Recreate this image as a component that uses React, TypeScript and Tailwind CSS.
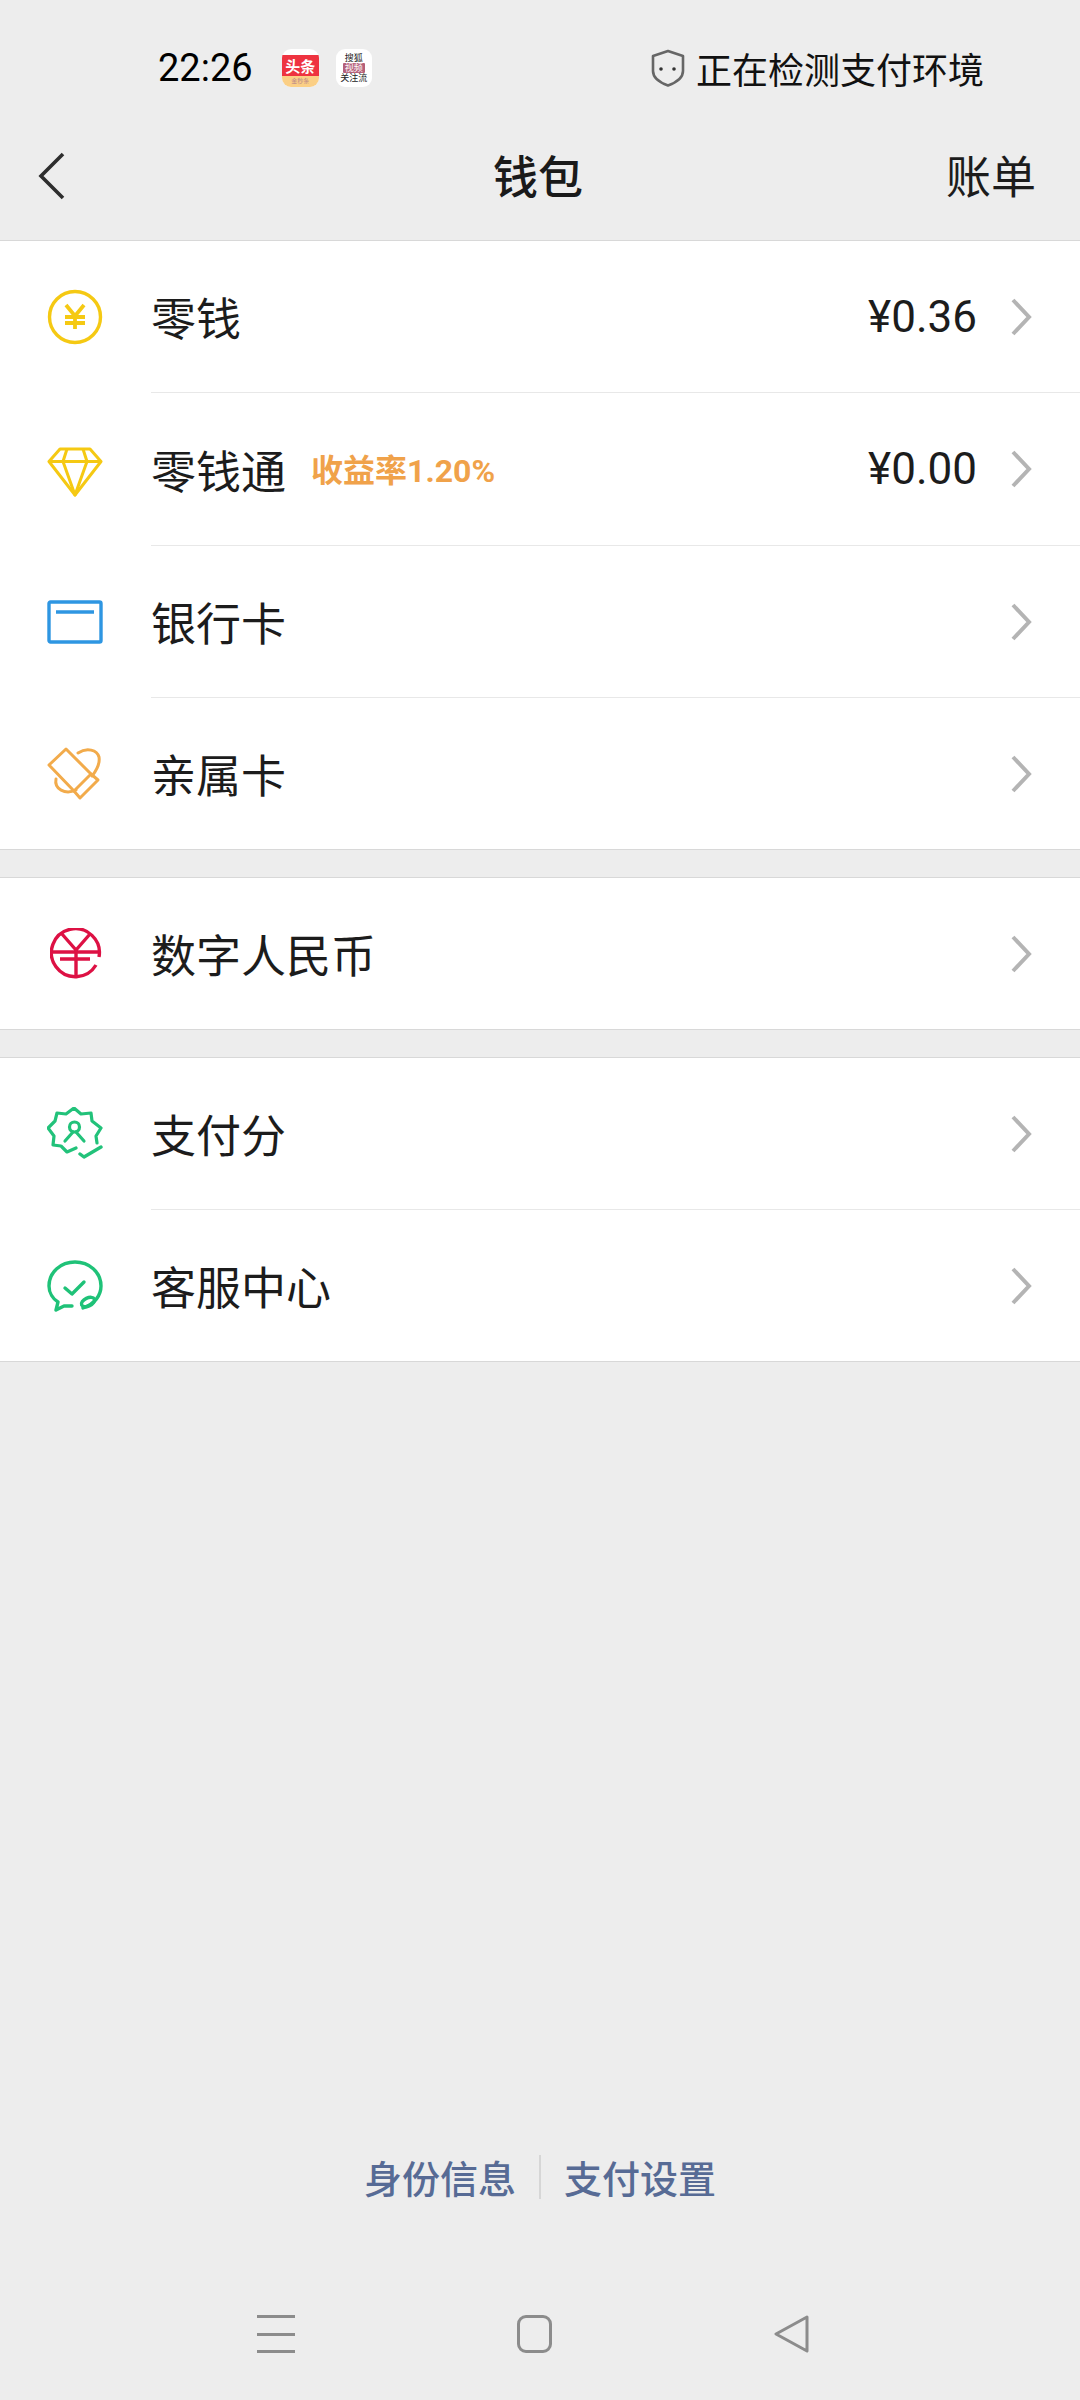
import React from "react";

const cjk = { fontFamily: '"Noto Sans CJK SC", "Noto Sans", sans-serif' };

function Chevron() {
  return (
    <svg width="22" height="40" viewBox="0 0 22 40" className="shrink-0" fill="none">
      <path d="M3 3 L19 20 L3 37" stroke="#b4b4b4" strokeWidth="4" />
    </svg>
  );
}

const Coin = () => (
  <svg width="56" height="56" viewBox="0 0 56 56" fill="none" stroke="#f5c913" strokeWidth="3.4">
    <circle cx="28" cy="28" r="25.5" />
    <path d="M19 16 L28 27 L37 16 M28 27 V40 M18 28 H38 M18 34 H38" strokeWidth="3.8" />
  </svg>
);
const Diamond = () => (
  <svg width="56" height="50" viewBox="0 0 56 50" className="mt-[5px]" fill="none" stroke="#f5c913" strokeWidth="3" strokeLinejoin="round">
    <path d="M13 2 H43 L54 14.5 L28 48 L2 14.5 Z" />
    <path d="M2 14.5 H54 M20 2 L16 14.5 L28 48 L40 14.5 L36 2" />
  </svg>
);
const BankCard = () => (
  <svg width="56" height="44" viewBox="0 0 56 44" fill="none" stroke="#2e96e2" strokeWidth="3.4">
    <rect x="2" y="2" width="52" height="40" rx="1.5" />
    <path d="M9 12 H47" />
  </svg>
);
const FamilyCard = () => (
  <svg width="56" height="54" viewBox="0 0 56 54" fill="none" stroke="#f2ab4b" strokeWidth="3" strokeLinejoin="round" strokeLinecap="round">
    <path d="M19 2 L44 27 L27 44 L2 18 Z" />
    <path d="M44 27 L51 33 L33 51 L27 44" />
    <path d="M31 6 C40 0 50 3 52 10 C53 16 49 24 45 29" />
    <path d="M9 32 C7 42 18 48 29 43" />
  </svg>
);
const DigitalRmb = () => (
  <svg width="52" height="52" viewBox="0 0 52 52" className="ml-[3px] mt-[1px]" fill="none" stroke="#dd1144" strokeWidth="3.4">
    <path d="M46 37 A24 24 0 1 1 49 29" />
    <path d="M12 6 L26 22 L40 6 M26 22 V50 M3 24 H49 M10 31 H40" />
  </svg>
);
const PayScore = () => (
  <svg width="56" height="54" viewBox="0 0 56 54" fill="none" stroke="#22c27a" strokeWidth="3.2" strokeLinejoin="round" strokeLinecap="round">
    <path d="M29 41 L20 45 L14 39 L6 38 L7 29 L1 21 L8 14 L10 6 L19 7 L27 1 L34 7 L44 6 L45 14 L54 21 L49 29 L50 36" />
    <circle cx="27.5" cy="20" r="5" />
    <path d="M18 34 L26 25 M37 34 L29 25" />
    <path d="M33 47 L37 50 L54 40" strokeWidth="3.4" />
  </svg>
);
const Service = () => (
  <svg width="56" height="52" viewBox="0 0 56 52" fill="none" stroke="#1fc278" strokeWidth="3.4" strokeLinecap="round" strokeLinejoin="round">
    <path d="M36 48 C48 44 54 35 54 26 C54 12 42 2 28 2 C14 2 2 12 2 26 C2 33 6 39 11 42 L9 50 L17 46 L25 46" />
    <path d="M18 28 L25 34 L37 22" />
    <ellipse cx="41" cy="42" rx="7" ry="4" transform="rotate(-25 41 42)" />
  </svg>
);

function Row({ icon, label, tag, amount, divider, height = "h-[152px]" }: { icon: React.ReactNode; label: string; tag?: string; amount?: string; divider?: boolean; height?: string }) {
  return (
    <div className={`flex items-stretch ${height}`}>
      <div className="flex w-[151px] shrink-0 items-center pl-[47px]">{icon}</div>
      <div className={`flex flex-1 items-center pr-[48px] ${divider ? "border-b border-[#e8e8e8]" : ""}`}>
        <span className="text-[45px] leading-none text-[#1c1c1c]" style={cjk}>{label}</span>
        {tag && <span className="ml-[25px] mt-[3px] text-[32px] font-bold leading-none text-[#f0a24a]" style={{ fontFamily: 'Roboto, "Noto Sans CJK SC", sans-serif' }}>{tag}</span>}
        <span className="flex-1" />
        {amount && <span className="mr-[33px] text-[44px] leading-none text-[#1c1c1c]" style={{ fontFamily: 'Roboto, "Noto Sans", sans-serif' }}>{amount}</span>}
        <Chevron />
      </div>
    </div>
  );
}

function Group({ children }: { children: React.ReactNode }) {
  return <div className="border-b border-[#d8d8d8] bg-white">{children}</div>;
}

export default function App() {
  return (
    <div className="flex h-[2400px] w-[1080px] flex-col bg-[#ededed]" style={cjk}>
      <header className="h-[241px] shrink-0 border-b border-[#d8d8d8]">
        <div className="flex h-[136px] items-center justify-between pl-[158px] pr-[96px]">
          <div className="flex items-center">
            <span className="text-[38px] leading-none text-black" style={{ fontFamily: "Roboto, sans-serif" }}>22:26</span>
            <div className="ml-[29px] flex h-[38px] w-[37px] flex-col overflow-hidden rounded-[9px] bg-white">
              <div className="mt-[6px] flex h-[21px] items-center justify-center bg-[#ee3340] text-[15px] font-bold leading-none text-white">头条</div>
              <div className="flex-1 bg-[#fbcf85] text-center text-[6px] leading-[9px] text-[#b88]">金秒条</div>
            </div>
            <div className="ml-[17px] flex h-[38px] w-[36px] flex-col items-center justify-center rounded-[9px] bg-white text-[9px] leading-[10px] text-[#222]">
              <span>搜狐</span>
              <span className="w-[22px] rounded-[1px] bg-[#b5607a] text-center text-white">视频</span>
              <span>关注流</span>
            </div>
          </div>
          <div className="flex items-center">
            <svg width="34" height="38" viewBox="0 0 34 38" fill="none">
              <path d="M17 2 L32 7 V22 C32 29 24 34 17 36.5 C10 34 2 29 2 22 V7 Z" stroke="#666" strokeWidth="2.6" strokeLinejoin="round" />
              <circle cx="10" cy="20" r="1.8" fill="#333" />
              <circle cx="23" cy="20" r="1.8" fill="#333" />
            </svg>
            <span className="ml-[11px] text-[36px] leading-none text-[#111]">正在检测支付环境</span>
          </div>
        </div>
        <div className="flex h-[104px] items-center pb-[28px] pl-[38px] pr-[44px]">
          <div className="flex-1">
            <svg width="28" height="48" viewBox="0 0 28 48" fill="none" className="mt-[4px]">
              <path d="M25 2 L3 24 L25 46" stroke="#2e2e2e" strokeWidth="3.6" />
            </svg>
          </div>
          <span className="ml-[2px] text-[45px] font-medium leading-none text-[#1a1a1a]">钱包</span>
          <div className="flex-1 text-right text-[45px] leading-none text-[#1c1c1c]">账单</div>
        </div>
      </header>

      <Group>
        <Row icon={<Coin />} label="零钱" amount="¥0.36" divider />
        <Row icon={<Diamond />} label="零钱通" tag="收益率1.20%" amount="¥0.00" divider height="h-[153px]" />
        <Row icon={<BankCard />} label="银行卡" divider />
        <Row icon={<FamilyCard />} label="亲属卡" height="h-[151px]" />
      </Group>

      <div className="h-[28px] shrink-0 border-b border-[#d8d8d8]" />

      <Group>
        <Row icon={<DigitalRmb />} label="数字人民币" height="h-[151px]" />
      </Group>

      <div className="h-[28px] shrink-0 border-b border-[#d8d8d8]" />

      <Group>
        <Row icon={<PayScore />} label="支付分" divider />
        <Row icon={<Service />} label="客服中心" height="h-[151px]" />
      </Group>

      <div className="flex-1" />

      <footer className="flex h-[46px] shrink-0 items-center justify-center text-[#576b95]">
        <span className="text-[38px] font-medium leading-none">身份信息</span>
        <span className="mx-[23px] h-[44px] w-[2px] bg-[#d6d6d6]" />
        <span className="text-[38px] font-medium leading-none">支付设置</span>
      </footer>

      <nav className="flex h-[200px] shrink-0 items-start justify-between pl-[257px] pr-[271px] pt-[115px]">
        <div className="flex h-[38px] w-[38px] flex-col justify-between">
          <div className="h-[3px] bg-[#8c8c8c]" />
          <div className="h-[3px] bg-[#8c8c8c]" />
          <div className="h-[3px] bg-[#8c8c8c]" />
        </div>
        <div className="h-[38px] w-[35px] rounded-[9px] border-[3px] border-[#8c8c8c]" />
        <svg width="35" height="38" viewBox="0 0 35 38" fill="none">
          <path d="M33 2 L2 19 L33 36 Z" stroke="#8c8c8c" strokeWidth="3" strokeLinejoin="round" />
        </svg>
      </nav>
    </div>
  );
}
